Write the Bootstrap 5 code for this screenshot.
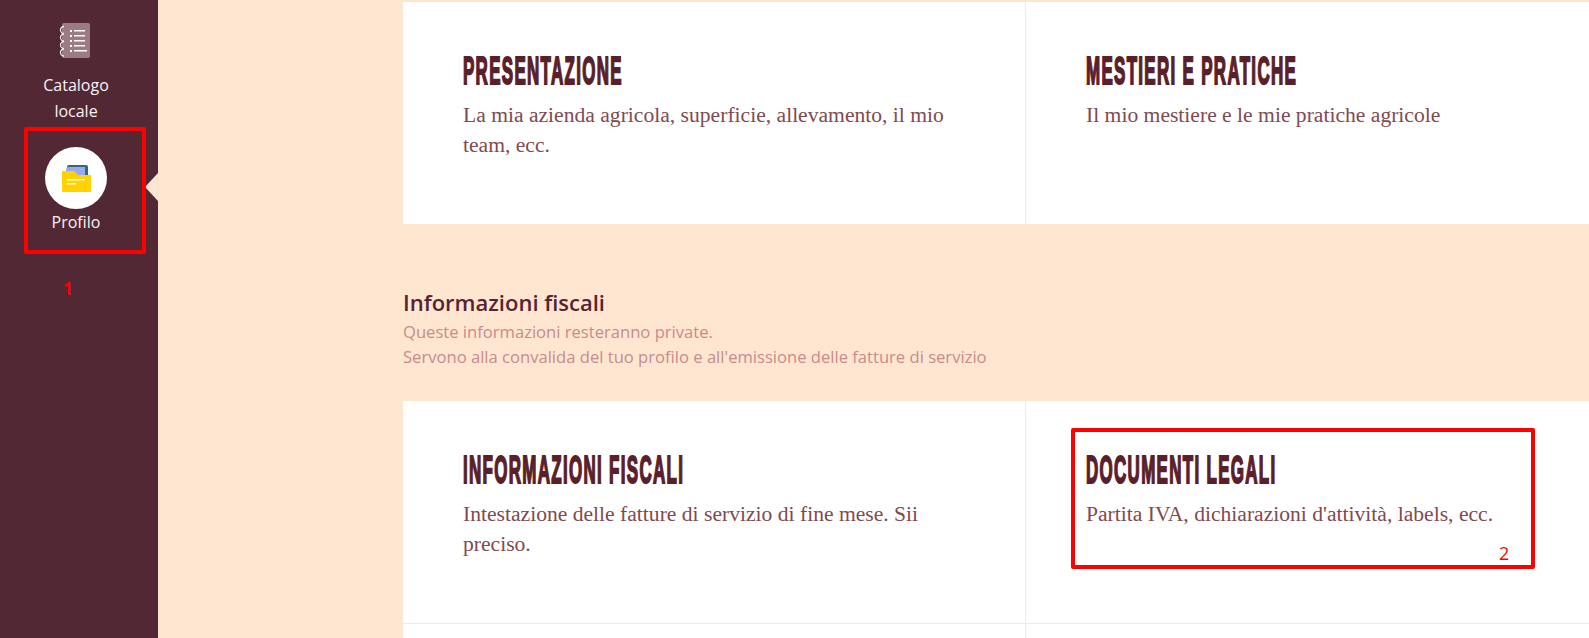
<!DOCTYPE html>
<html lang="it">
<head>
    <meta charset="UTF-8">
    <meta name="viewport" content="width=device-width, initial-scale=1.0">
    <title>Profilo</title>
    <link href="https://cdn.jsdelivr.net/npm/bootstrap@5.3.2/dist/css/bootstrap.min.css" rel="stylesheet">
    <style>
        html, body { height: 100%; overflow: hidden; }
        body { background: #ffe6d0; font-family: "Open Sans", "Noto Sans", sans-serif; }
        .pagina { height: 638px; position: relative; overflow: hidden; }
        .barra { width: 158px; background: #532835; color: #fff; position: relative; flex-shrink: 0; padding-top: 22px; }
        .voce { width: 152px; font-size: 16px; line-height: 26px; text-align: center; color: #f8f2f2; }
        .voce-catalogo { height: 105px; }
        .voce-catalogo svg { display: block; margin: 0 auto 14px; }
        .voce-profilo { padding-top: 20px; }
        .cerchio { width: 62px; height: 62px; border-radius: 50%; background: #fff; margin: 0 auto; }
        .freccia { position: absolute; right: 0; top: 173px; width: 0; height: 0; border-style: solid; border-width: 14px 13px 14px 0; border-color: transparent #ffe6d0 transparent transparent; }
        .contenuto { padding: 2px 0 0 245px; flex-grow: 1; min-width: 0; }
        .riga-bianca { background: #fff; height: 222px; }
        .riga-fine { height: 15px; border-top: 1px solid #ffe6d0; }
        .cella { padding: 47px 60px 0; }
        .cella-sx { width: 623px; flex-shrink: 0; border-right: 1px solid #ffe6d0; }
        .titolo-cella { font-family: "Liberation Sans", sans-serif; font-weight: 700; font-size: 39px; line-height: 44px; letter-spacing: 3px; color: #5a2029; margin: 0 0 7px; white-space: nowrap; -webkit-text-stroke: 2px #5a2029; transform: scaleX(.435); transform-origin: left center; }
        .testo-cella { font-family: "Liberation Serif", serif; font-size: 21.6px; line-height: 30px; color: #7f4a50; margin: 0; }
        .sezione { height: 177px; padding-top: 65px; }
        .sezione h2 { font-family: "Open Sans", sans-serif; font-size: 22px; font-weight: 600; line-height: 26px; color: #562431; margin: 0 0 4px; }
        .sezione p { font-size: 16.6px; line-height: 25px; color: #c98b8d; margin: 0; }
        .riquadro { position: absolute; border: 4px solid #f00; border-radius: 2px; }
        .riquadro-1 { left: 24px; top: 127px; width: 122px; height: 127px; }
        .riquadro-2 { left: 1071px; top: 428px; width: 464px; height: 141px; }
        .numero { position: absolute; color: #f00; }
        .numero-1 { left: 63px; top: 277px; font-size: 17px; font-weight: 700; line-height: 24px; }
        .numero-2 { left: 1499px; top: 541px; font-size: 18px; line-height: 24px; }
    </style>
</head>
<body>
    <div class="pagina d-flex">
        <div class="barra">
            <div class="voce voce-catalogo">
                <svg width="36" height="36" viewBox="0 0 36 36">
                    <rect x="4" y="1" width="28" height="35" rx="2" fill="#9b7b84"/>
                    <g fill="none" stroke="#eee" stroke-width="1.3">
                        <path d="M6 4.500a3.500 3.500 0 1 0 0 7"/><path d="M6 12a3.500 3.500 0 1 0 0 7"/><path d="M6 19.500a3.500 3.500 0 1 0 0 7"/><path d="M6 27a3.500 3.500 0 1 0 0 7"/>
                    </g>
                    <g fill="#fff">
                        <rect x="12" y="8" width="2" height="2"/><rect x="16" y="8" width="11" height="1.500"/>
                        <rect x="12" y="13" width="2" height="2"/><rect x="16" y="13" width="11" height="1.500"/>
                        <rect x="12" y="18" width="2" height="2"/><rect x="16" y="18" width="11" height="1.500"/>
                        <rect x="12" y="23" width="2" height="2"/><rect x="16" y="23" width="11" height="1.500"/>
                        <rect x="12" y="28" width="2" height="2"/><rect x="16" y="28" width="13" height="1.500"/>
                    </g>
                </svg>
                Catalogo<br>locale
            </div>
            <div class="voce voce-profilo">
                <div class="cerchio d-flex align-items-center justify-content-center">
                    <svg width="30" height="27" viewBox="0 0 30 27">
                        <path d="M8 0h17a2 2 0 0 1 2 2v13H6V2a2 2 0 0 1 2-2z" fill="#2f6b78"/>
                        <path d="M8 2h16v13H5V5a3 3 0 0 1 3-3z" fill="#9aa8f0"/>
                        <path d="M1 6h12l4 4h13v16a1 1 0 0 1-1 1H2a1 1 0 0 1-1-1z" fill="#ffd200"/>
                        <rect x="6" y="14" width="18" height="1.500" fill="#fff"/>
                        <rect x="6" y="18" width="9" height="1.500" fill="#fff"/>
                    </svg>
                </div>
                Profilo
            </div>
            <div class="freccia"></div>
        </div>
        <div class="contenuto">
            <div class="riga-bianca d-flex">
                <div class="cella cella-sx">
                    <h3 class="titolo-cella">PRESENTAZIONE</h3>
                    <p class="testo-cella">La mia azienda agricola, superficie, allevamento, il mio team, ecc.</p>
                </div>
                <div class="cella">
                    <h3 class="titolo-cella">MESTIERI E PRATICHE</h3>
                    <p class="testo-cella">Il mio mestiere e le mie pratiche agricole</p>
                </div>
            </div>
            <div class="sezione">
                <h2>Informazioni fiscali</h2>
                <p>Queste informazioni resteranno private.<br>Servono alla convalida del tuo profilo e all'emissione delle fatture di servizio</p>
            </div>
            <div class="riga-bianca d-flex">
                <div class="cella cella-sx">
                    <h3 class="titolo-cella">INFORMAZIONI FISCALI</h3>
                    <p class="testo-cella">Intestazione delle fatture di servizio di fine mese. Sii preciso.</p>
                </div>
                <div class="cella">
                    <h3 class="titolo-cella">DOCUMENTI LEGALI</h3>
                    <p class="testo-cella">Partita IVA, dichiarazioni d'attività, labels, ecc.</p>
                </div>
            </div>
            <div class="riga-bianca riga-fine d-flex">
                <div class="cella cella-sx p-0"></div>
            </div>
        </div>
        <div class="riquadro riquadro-1"></div>
        <span class="numero numero-1">1</span>
        <div class="riquadro riquadro-2"></div>
        <span class="numero numero-2">2</span>
    </div>
    <script src="https://cdn.jsdelivr.net/npm/bootstrap@5.3.2/dist/js/bootstrap.bundle.min.js"></script>
</body>
</html>
